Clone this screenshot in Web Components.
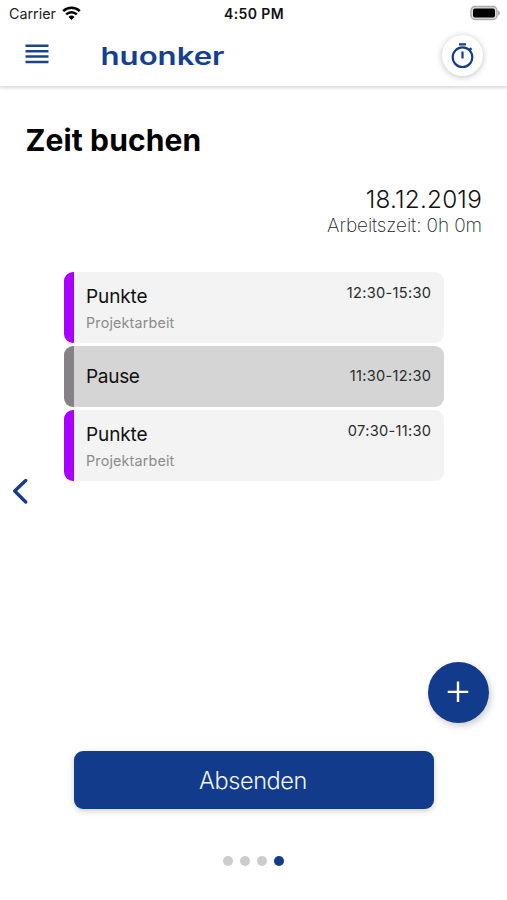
<!DOCTYPE html>
<html lang="de">
<head>
<meta charset="utf-8">
<title>Zeit buchen</title>
<style>
html,body{margin:0;background:#fff}
body{font-family:Inter,"Liberation Sans",sans-serif;color:#111}
</style>
</head>
<body>
<time-app></time-app>
<script>
const define = (name, html) => customElements.define(name, class extends HTMLElement {
  constructor() {
    super();
    const t = document.createElement('template');
    t.innerHTML = html;
    this.attachShadow({ mode: 'open' }).append(t.content.cloneNode(true));
  }
});

define('status-bar', `
<style>
:host{display:grid;grid-template-columns:1fr auto 1fr;align-items:center;height:28px;padding:0 7px 2px 9px;box-sizing:border-box;color:#222}
.left{display:flex;align-items:center;gap:6px;font-size:14.3px}
.time{font-size:14px;font-weight:600;letter-spacing:.4px;margin-left:-1px;color:#111}
.batt{justify-self:end;display:flex}
svg{display:block}
</style>
<div class="left"><span>Carrier</span>
<svg width="19" height="14" viewBox="0 0 19 14"><g fill="none" stroke="#000" stroke-width="2.500"><path d="M1.200 5.100a12 12 0 0 1 16.600 0"/><path d="M4.200 8.300a7.600 7.600 0 0 1 10.600 0"/></g><path d="M9.500 14 6.500 10.900a4.300 4.300 0 0 1 6 0z"/></svg></div>
<div class="time">4:50 PM</div>
<div class="batt"><svg width="30" height="16" viewBox="0 0 30 16"><rect x="1" y="1.500" width="26" height="13" rx="4" fill="#ddd" stroke="#aaa" stroke-width="1.400"/><rect x="3" y="3.500" width="22" height="9" rx="2" fill="#000"/><path d="M28 5.600q2 .6 2 2.400t-2 2.400z" fill="#aaa"/></svg></div>`);

define('brand-logo', `
<style>:host{display:block;width:126px;height:24px}svg{display:block;overflow:visible}text{font:600 24.500px Inter,"Liberation Sans",sans-serif;fill:#143f95}</style>
<svg width="126" height="24"><text x="-.5" y="20.500" textLength="124" lengthAdjust="spacingAndGlyphs">huonker</text></svg>`);

define('timer-button', `
<style>:host{display:flex;align-items:center;justify-content:center;width:41px;height:41px;border-radius:50%;background:#fff;box-shadow:0 1px 6px rgba(0,0,0,.25)}svg{display:block}</style>
<svg width="24" height="28" viewBox="0 0 24 28" fill="none" stroke="#143c8c"><circle cx="11.500" cy="15.200" r="9.800" stroke-width="2.200"/><path d="M8 2.300h7M11.500 9.500v7" stroke-width="2.200"/><path d="m18 8.600 2.400-2.400" stroke-width="2.600"/></svg>`);

define('app-header', `
<style>
:host{display:flex;align-items:center;height:59px;padding:0 24px 3px 25px;box-sizing:border-box;border-bottom:1px solid #e2e2e2;box-shadow:0 1px 3px rgba(0,0,0,.16);clip-path:inset(0 0 -6px 0)}
.menu{display:block;margin-top:-3px}
brand-logo{margin:1px auto 0 52px}
</style>
<svg class="menu" width="24" height="20" viewBox="0 0 24 20"><path d="M.5 1.800h23M.5 7.200h23M.5 12.600h23M.5 18h23" stroke="#1c4295" stroke-width="2.500"/></svg><brand-logo></brand-logo><timer-button></timer-button>`);

define('day-summary', `
<style>
:host{display:flex;flex-direction:column;align-items:flex-end;font-weight:300}
.date{font-size:24.300px;line-height:27px;letter-spacing:.22px;color:#111}
.work{font-size:19px;line-height:25px;letter-spacing:-.1px;font-weight:200;color:#222}
</style>
<div class="date"><slot name="date"></slot></div><div class="work"><slot></slot></div>`);

define('time-entry', `
<style>
:host{display:flex;justify-content:space-between;box-sizing:border-box;height:71px;border-radius:9px;overflow:hidden;background:#f3f3f3;border-left:10px solid #a900ff;padding:12px 13px 0 12px}
:host([pause]){height:61px;background:#d5d5d5;border-left-color:#868087;align-items:center;padding-top:0}
.title{font-size:19px;line-height:25px;letter-spacing:-.1px;color:#111}
.sub{font-size:14.300px;line-height:18px;margin-top:5px;letter-spacing:.18px;color:#8b8b8b}
:host([pause]) .sub{display:none}
:host([pause]) .title{letter-spacing:-.3px}
.range{font-size:14.600px;line-height:19px;letter-spacing:.3px;margin-right:-.3px;color:#2b2b2b}
</style>
<div><div class="title"><slot></slot></div><div class="sub"><slot name="sub"></slot></div></div><div class="range"><slot name="range"></slot></div>`);

define('add-button', `
<style>:host{display:flex;align-items:center;justify-content:center;width:61px;height:61px;border-radius:50%;background:#133b8c;box-shadow:2px 3px 7px rgba(0,0,0,.2)}svg{display:block}</style>
<svg width="22" height="24" viewBox="0 0 22 24"><path d="M.7 10.900h20.500M11 .6v20.500" stroke="#fff" stroke-width="2.400"/></svg>`);

define('submit-button', `
<style>:host{display:flex;align-items:center;justify-content:center;height:57.500px;border-radius:9px;background:#133b8c;color:#f1f6ff;font-size:23.500px;letter-spacing:-.4px;box-sizing:border-box;padding:1px 2px 0 0;font-weight:300;box-shadow:0 2px 6px rgba(0,0,0,.2)}</style><slot></slot>`);

define('page-dots', `
<style>:host{display:flex;justify-content:center;gap:7px}i{width:10px;height:10px;border-radius:50%;background:#ccc}i:last-of-type{background:#133b8c}</style><i></i><i></i><i></i><i></i>`);

define('time-app', `
<style>
:host{display:flex;flex-direction:column;width:507px;height:900px;overflow:hidden;background:#fff}
h1{margin:34px 0 0 25.500px;font-size:30px;line-height:38px;letter-spacing:.12px;font-weight:700;color:#000}
day-summary{margin:27px 25px 0 0}
.body{display:grid;grid-template-columns:64px 380px;margin-top:34px;height:272px}
.back{align-self:start;margin:206px 0 0 12px}
.list{display:flex;flex-direction:column;gap:3px}
.list time-entry:last-child{margin-top:-.5px;height:71.500px}
svg{display:block}
add-button{align-self:flex-end;margin:118px 18.500px 0 0}
submit-button{margin:28px 73px 0 74px}
page-dots{margin-top:47.500px}
</style>
<status-bar></status-bar>
<app-header></app-header>
<h1>Zeit buchen</h1>
<day-summary><span slot="date">18.12.2019</span>Arbeitszeit: 0h 0m</day-summary>
<div class="body">
<div class="back"><svg width="16" height="26" viewBox="0 0 16 26"><path d="M13.700 2.500 2.700 13l11 11" fill="none" stroke="#143c8c" stroke-width="3.300" stroke-linecap="round" stroke-linejoin="round"/></svg></div>
<div class="list">
<time-entry>Punkte<span slot="sub">Projektarbeit</span><span slot="range">12:30-15:30</span></time-entry>
<time-entry pause>Pause<span slot="range">11:30-12:30</span></time-entry>
<time-entry>Punkte<span slot="sub">Projektarbeit</span><span slot="range">07:30-11:30</span></time-entry>
</div>
</div>
<add-button></add-button>
<submit-button>Absenden</submit-button>
<page-dots></page-dots>`);
</script>
</body>
</html>
